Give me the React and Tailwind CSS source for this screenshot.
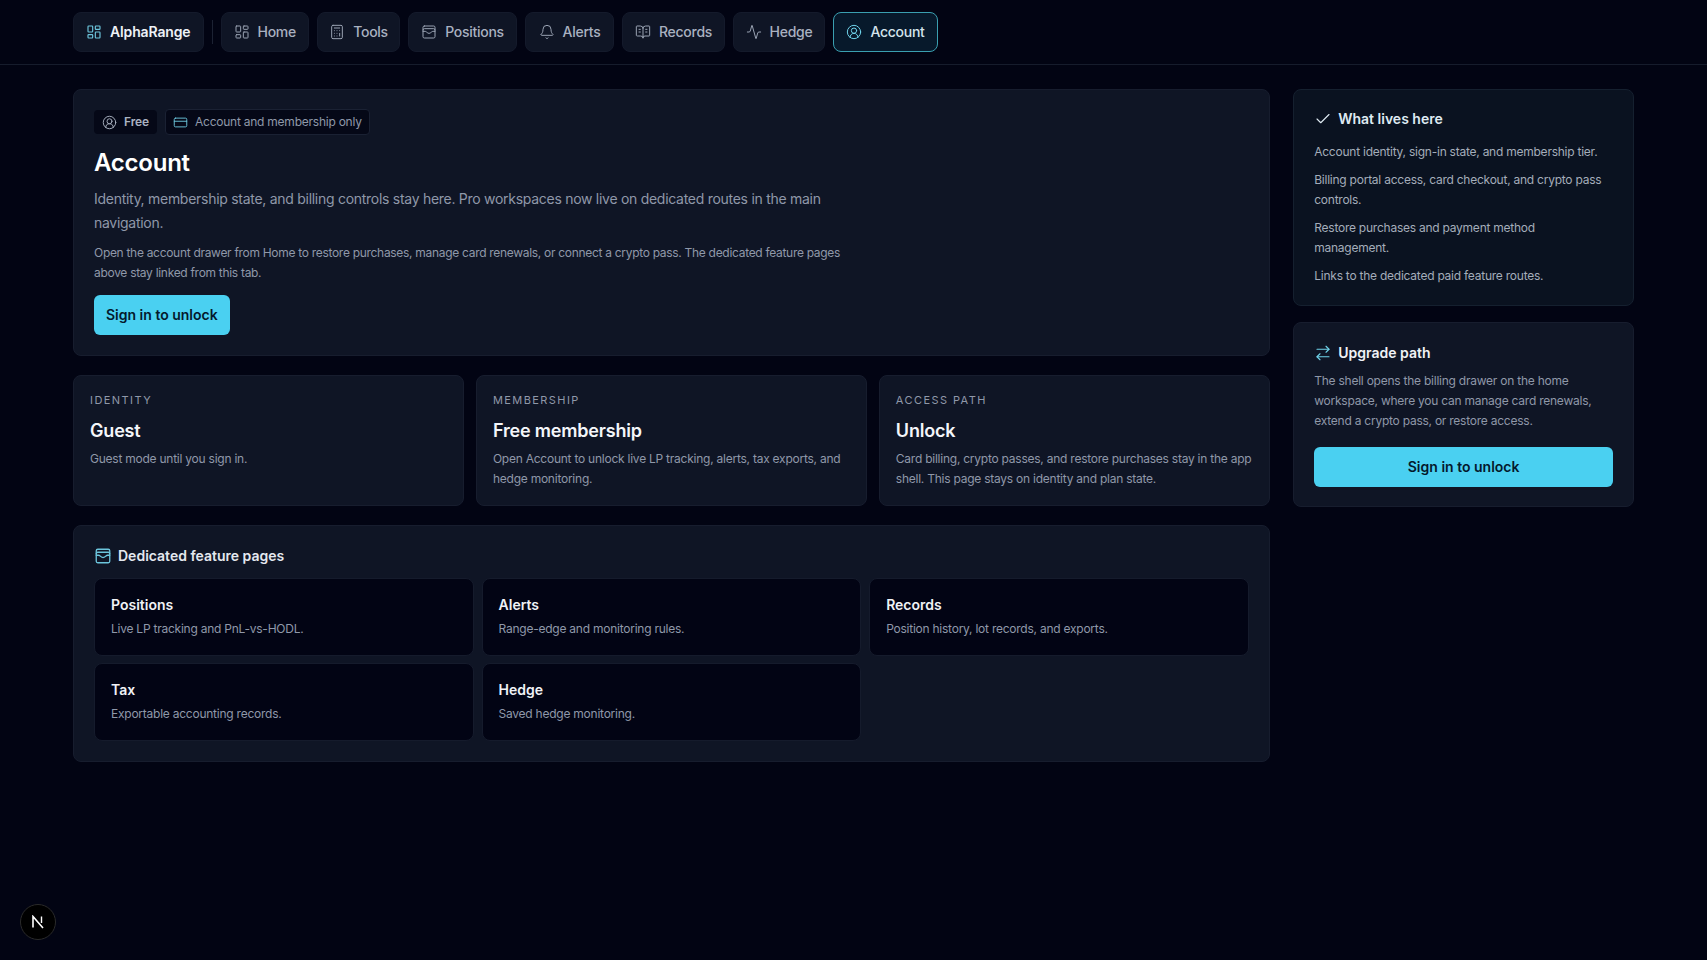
import { LayoutDashboard, Calculator, WalletCards, Bell, BookOpenText, Activity, CircleUserRound, CreditCard, Check, ArrowRightLeft } from 'lucide-react';

const NAV = [
  ['Home', LayoutDashboard, 'w-[88.5px]'],
  ['Tools', Calculator, 'w-[83px]'],
  ['Positions', WalletCards, 'w-[109px]'],
  ['Alerts', Bell, 'w-[89px]'],
  ['Records', BookOpenText, 'w-[103px]'],
  ['Hedge', Activity, 'w-[92px]'],
];

const STATS = [
  ['IDENTITY', 'Guest', 'Guest mode until you sign in.'],
  ['MEMBERSHIP', 'Free membership', 'Open Account to unlock live LP tracking, alerts, tax exports, and hedge monitoring.'],
  ['ACCESS PATH', 'Unlock', 'Card billing, crypto passes, and restore purchases stay in the app shell. This page stays on identity and plan state.'],
];

const FEATURES = [
  ['Positions', 'Live LP tracking and PnL-vs-HODL.'],
  ['Alerts', 'Range-edge and monitoring rules.'],
  ['Records', 'Position history, lot records, and exports.'],
  ['Tax', 'Exportable accounting records.'],
  ['Hedge', 'Saved hedge monitoring.'],
];

const LIVES_HERE = [
  'Account identity, sign-in state, and membership tier.',
  'Billing portal access, card checkout, and crypto pass controls.',
  'Restore purchases and payment method management.',
  'Links to the dedicated paid feature routes.',
];

function NavItem({ label, icon: Icon, width }) {
  return (
    <button className={`${width} h-10 flex items-center justify-center gap-2 rounded-lg border border-[#141a2b] bg-[#0f1525] text-sm tracking-[-0.02em] font-medium text-[#a9b1c0]`}>
      <Icon size={16} strokeWidth={1.5} className="text-[#9aa3b3]" />
      {label}
    </button>
  );
}

export default function App() {
  return (
    <div className="min-h-[960px] bg-[#020413] font-['Inter',sans-serif] relative">
      <header className="h-[65px] border-b border-[#161c2c] px-[73px] flex items-center gap-2">
        <button className="h-10 px-3 flex items-center gap-2 rounded-lg border border-[#141a2b] bg-[#0f1525] text-sm tracking-[-0.01em] font-semibold text-[#eef2f7]">
          <LayoutDashboard size={16} strokeWidth={1.75} className="text-[#6cc5dc]" />
          AlphaRange
        </button>
        <div className="w-px h-6 bg-[#1c2233]" />
        {NAV.map(([label, icon, width]) => <NavItem key={label} label={label} icon={icon} width={width} />)}
        <button className="w-[105px] h-10 flex items-center justify-center gap-2 rounded-lg border border-[#3a9fb0] bg-[#07192b] text-sm tracking-[-0.02em] font-medium text-[#d4e4ec]">
          <CircleUserRound size={16} strokeWidth={1.5} className="text-[#6fd3ea]" />
          Account
        </button>
      </header>

      <main className="px-[73px] pt-6 flex gap-[23.5px] items-start">
        <div className="w-[1197.5px] flex flex-col">
          <section className="h-[267px] rounded-lg border border-[#171d2e] bg-[#0f1525] p-5">
            <div className="-mt-px flex items-center gap-2">
              <span className="h-[24px] px-2 flex items-center gap-[7px] rounded bg-[#050817] text-xs font-semibold tracking-[-0.01em] text-[#aab2c1]">
                <CircleUserRound size={15} strokeWidth={1.5} />
                Free
              </span>
              <span className="h-[26px] px-[7px] flex items-center gap-[7px] rounded border border-[#1a2133] bg-[#050817] text-xs tracking-[-0.02em] text-[#8f98a9]">
                <CreditCard size={15} strokeWidth={1.5} className="text-[#6cc5dc]" />
                Account and membership only
              </span>
            </div>
            <h1 className="mt-3 text-2xl leading-8 font-semibold tracking-[-0.01em] text-white">Account</h1>
            <p className="mt-2 max-w-3xl text-sm leading-6 tracking-[-0.02em] text-[#8f98a9]">
              Identity, membership state, and billing controls stay here. Pro workspaces now live on dedicated routes in the main navigation.
            </p>
            <p className="mt-2 max-w-3xl text-xs leading-5 tracking-[-0.025em] text-[#8f98a9]">
              Open the account drawer from Home to restore purchases, manage card renewals, or connect a crypto pass. The dedicated feature pages above stay linked from this tab.
            </p>
            <button className="mt-3 h-10 px-3 rounded-md bg-[#4ad0f1] text-sm font-semibold text-[#04192c]">Sign in to unlock</button>
          </section>

          <section className="mt-[19px] grid grid-cols-3 gap-3">
            {STATS.map(([kicker, title, text]) => (
              <div key={kicker} className="h-[130.5px] rounded-lg border border-[#171d2e] bg-[#0f1525] px-4 pt-4">
                <div className="text-[11px] leading-4 tracking-[0.13em] text-[#8f98a9]">{kicker}</div>
                <div className="mt-[9px] text-lg leading-7 font-semibold tracking-[-0.01em] text-[#f4f6fa]">{title}</div>
                <p className="mt-1 text-xs leading-5 tracking-[-0.02em] text-[#8f98a9]">{text}</p>
              </div>
            ))}
          </section>

          <section className="mt-[19.5px] h-[236.5px] rounded-lg border border-[#171d2e] bg-[#0f1525] px-5 pt-5">
            <div className="flex items-center gap-[6px] text-sm leading-5 font-semibold text-[#e4e8ef]">
              <WalletCards size={18} strokeWidth={1.75} className="text-[#6cc5dc]" />
              Dedicated feature pages
            </div>
            <div className="mt-3 grid grid-cols-3 gap-x-2 gap-y-[7px]">
              {FEATURES.map(([title, text]) => (
                <div key={title} className="h-[78px] rounded-lg border border-[#151b2c] bg-[#020414] px-4 pt-4">
                  <div className="text-sm leading-5 font-semibold text-[#f0f2f6]">{title}</div>
                  <p className="mt-1 text-xs leading-5 tracking-[-0.02em] text-[#8f98a9]">{text}</p>
                </div>
              ))}
            </div>
          </section>
        </div>

        <aside className="w-[341px] flex flex-col gap-4">
          <section className="h-[217px] rounded-lg border border-[#15202f] bg-[#0a1220] px-5 pt-[19px]">
            <div className="flex items-center gap-[6px] text-sm leading-5 font-semibold text-[#dfeaf2]">
              <Check size={18} strokeWidth={1.5} />
              What lives here
            </div>
            <div className="mt-[13px] pr-2 flex flex-col gap-2">
              {LIVES_HERE.map((line) => (
                <p key={line} className="text-xs leading-5 tracking-[-0.02em] text-[#a4adba]">{line}</p>
              ))}
            </div>
          </section>
          <section className="h-[185px] rounded-lg border border-[#171d2e] bg-[#0f1525] px-5 pt-5">
            <div className="flex items-center gap-[6px] text-sm leading-5 font-semibold text-[#f0f2f6]">
              <ArrowRightLeft size={18} strokeWidth={1.5} className="text-[#6fd3ea]" />
              Upgrade path
            </div>
            <p className="mt-2 text-xs leading-5 tracking-[-0.02em] text-[#8f98a9]">
              The shell opens the billing drawer on the home workspace, where you can manage card renewals, extend a crypto pass, or restore access.
            </p>
            <button className="mt-4 w-full h-10 rounded-md bg-[#4ad0f1] text-sm font-semibold text-[#04192c]">Sign in to unlock</button>
          </section>
        </aside>
      </main>

      <div className="absolute left-5 top-[904px] w-9 h-9 rounded-full bg-black border border-[#2a2a2a] flex items-center justify-center">
        <svg width="14" height="14" viewBox="0 0 14 14" fill="none">
          <path d="M2 12.5V1.5L12 13" stroke="white" strokeWidth="1.6" />
          <path d="M10.5 1.5V8" stroke="white" strokeWidth="1.4" />
        </svg>
      </div>
    </div>
  );
}
